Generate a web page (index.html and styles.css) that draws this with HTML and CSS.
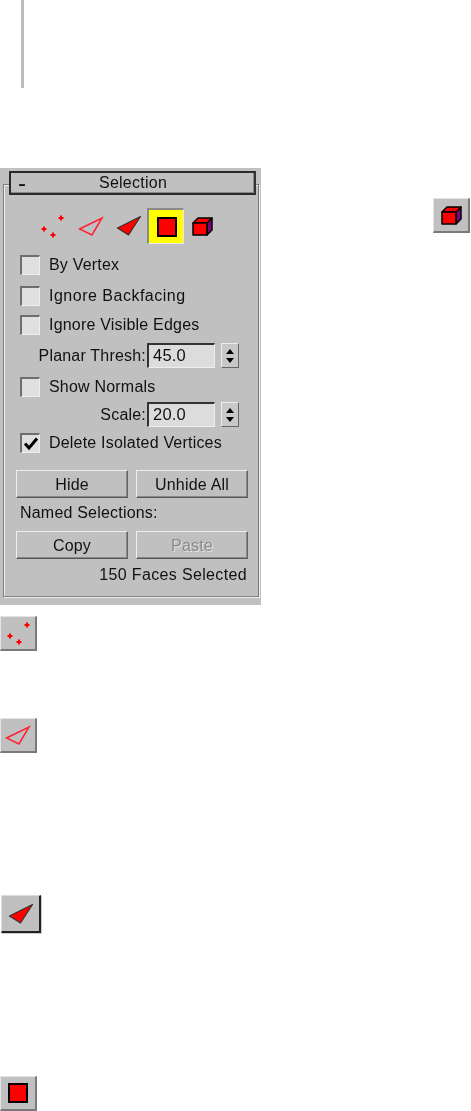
FILE: index.html
```html
<!DOCTYPE html>
<html lang="en">
<head>
<meta charset="utf-8">
<title>Selection</title>
<link rel="stylesheet" href="styles.css">
</head>
<body>
<svg width="0" height="0" class="defs">
  <defs>
    <g id="i-verts" fill="#ff0000">
      <path d="M20 1.5h2v1.5h1.5v2h-1.5v1.5h-2v-1.5h-1.5v-2h1.5z"/>
      <path d="M3 12.5h2v1.5h1.5v2h-1.5v1.5h-2v-1.5h-1.5v-2h1.5z"/>
      <path d="M12 18.5h2v1.5h1.5v2h-1.5v1.5h-2v-1.5h-1.5v-2h1.5z"/>
    </g>
    <path id="i-edges" d="M1.5 13 L24 2 L14 19 Z" fill="none" stroke="#ff2030" stroke-width="1.5"/>
    <path id="i-face" d="M1.5 13 L24.5 1.5 L12.5 20 Z" fill="#ff0000" stroke="#333" stroke-width="1.2" stroke-linejoin="round"/>
    <rect id="i-poly" x="1" y="1" width="18" height="18" fill="#ff0000" stroke="#000" stroke-width="2"/>
    <g id="i-cube" stroke="#000" stroke-width="1.5" stroke-linejoin="round">
      <path d="M15 6 L20 1 V13 L15 18 Z" fill="#800080"/>
      <path d="M1 6 L6 1 H20 L15 6 Z" fill="#ff0000"/>
      <rect x="1" y="6" width="14" height="12" fill="#ff0000"/>
    </g>
  </defs>
</svg>

<div class="rule"></div>

<div class="top">
  <section class="panel">
    <div class="group">
      <header class="title"><span class="minus">-</span><span class="title-text">Selection</span></header>
      <div class="levels">
        <span class="level lv-v"><svg width="24" height="25"><use href="#i-verts"/></svg></span>
        <span class="level lv-e"><svg width="26" height="21"><use href="#i-edges"/></svg></span>
        <span class="level lv-f"><svg width="26" height="22"><use href="#i-face"/></svg></span>
        <span class="level active"><svg width="20" height="20"><use href="#i-poly"/></svg></span>
        <span class="level lv-c"><svg width="21" height="19"><use href="#i-cube"/></svg></span>
      </div>
      <label class="check c1"><span class="box"></span>By Vertex</label>
      <label class="check c2 wide"><span class="box"></span>Ignore Backfacing</label>
      <label class="check c3"><span class="box"></span>Ignore Visible Edges</label>
      <div class="field f1">
        <span class="field-label">Planar Thresh:</span><span class="input">45.0</span>
        <span class="spin"><i class="up"></i><i class="down"></i></span>
      </div>
      <label class="check c4"><span class="box"></span>Show Normals</label>
      <div class="field f2">
        <span class="field-label">Scale:</span><span class="input">20.0</span>
        <span class="spin"><i class="up"></i><i class="down"></i></span>
      </div>
      <label class="check c5"><span class="box"><svg width="16" height="16" viewBox="0 0 16 16"><path d="M2 7.5 L6 12 L14 2.5" fill="none" stroke="#000" stroke-width="3"/></svg></span>Delete Isolated Vertices</label>
      <div class="buttons b1"><button class="btn">Hide</button><button class="btn">Unhide All</button></div>
      <div class="named">Named Selections:</div>
      <div class="buttons b2"><button class="btn">Copy</button><button class="btn off">Paste</button></div>
      <div class="status">150 Faces Selected</div>
    </div>
  </section>
  <span class="tool right"><svg width="21" height="19"><use href="#i-cube"/></svg></span>
</div>

<span class="tool t1"><svg width="24" height="25"><use href="#i-verts"/></svg></span>
<span class="tool t2"><svg width="26" height="21"><use href="#i-edges"/></svg></span>
<span class="tool t3"><svg width="26" height="22"><use href="#i-face"/></svg></span>
<span class="tool t4"><svg width="20" height="20"><use href="#i-poly"/></svg></span>
</body>
</html>
```
FILE: styles.css
```css
html, body { margin: 0; padding: 0; background: #fff; }
body { width: 471px; height: 1111px; overflow: hidden; font-family: "Liberation Sans", Arial, sans-serif; color: #111; }
.defs { position: absolute; }
.rule { width: 3px; height: 88px; margin-left: 21px; background: #bdbdbd; }

.top { display: flex; align-items: flex-start; margin-top: 80px; }
.panel { width: 261px; height: 437px; background: #c0c0c0; padding: 3px 2px 0 3px; box-sizing: border-box; filter: blur(0.5px); }
.group { position: relative; height: 426px; }
.group::before { content: ""; position: absolute; left: 0; right: 0; top: 13px; bottom: 0; border: 1px solid #808080; border-right-color: #777; box-shadow: 1px 1px 0 #eee, inset 1px 1px 0 #eee; pointer-events: none; }

.title { position: relative; display: flex; height: 24px; margin: 0 3px 0 6px; box-sizing: border-box; border: 2px solid #2a2a2a; border-right-color: #333; background: #c0c0c0; font-size: 16px; line-height: 20px; box-shadow: inset -1px -1px 0 #888; }
.minus { width: 20px; padding-left: 7px; box-sizing: border-box; font-size: 24px; line-height: 20px; }
.title-text { position: absolute; left: 0; right: 0; top: 0; text-align: center; letter-spacing: .25px; padding-left: 1px; }

.levels { display: flex; align-items: center; height: 36px; margin-top: 13px; margin-left: 37px; position: relative; }
.level { display: flex; align-items: center; justify-content: center; }
.lv-v { width: 24px; margin-right: 14px; }
.lv-e { width: 26px; margin-right: 12px; }
.lv-f { width: 26px; margin-right: 5px; }
.active { width: 37px; height: 36px; box-sizing: border-box; padding-left: 1px; background: #ffff00; border-top: 2px solid #8a8a8a; border-left: 2px solid #8a8a8a; border-right: 1px solid #e8e8e8; border-bottom: 1px solid #e8e8e8; margin-right: 8px; }
.lv-c { width: 21px; }

.check { display: flex; align-items: center; height: 20px; margin-left: 17px; font-size: 16px; line-height: 20px; letter-spacing: .2px; position: relative; }
.check.wide { letter-spacing: .5px; }
.box { flex: none; display: flex; align-items: center; justify-content: center; width: 20px; height: 20px; box-sizing: border-box; margin-right: 9px; background: #e0e0e0; border-top: 2px solid #6e6e6e; border-left: 2px solid #6e6e6e; border-right: 1px solid #eee; border-bottom: 1px solid #eee; }
.c1 { margin-top: 11px; }
.c2 { margin-top: 11px; }
.c3 { margin-top: 9px; }
.c4 { margin-top: 9px; }
.c5 { margin-top: 6px; }

.field { display: flex; align-items: center; justify-content: flex-end; height: 25px; font-size: 16px; margin-right: 20px; letter-spacing: .2px; }
.f1 { margin-top: 8px; }
.f2 { margin-top: 5px; }
.field-label { margin-right: 1px; }
.input { width: 68px; height: 25px; box-sizing: border-box; background: #dcdcdc; border-top: 2px solid #333; border-left: 2px solid #333; border-right: 1px solid #eee; border-bottom: 1px solid #eee; padding-left: 4px; line-height: 21px; font-size: 16.5px; }
.spin { width: 18px; height: 25px; margin-left: 6px; box-sizing: border-box; display: flex; flex-direction: column; align-items: center; justify-content: center; gap: 4px; background: #c8c8c8; border: 1px solid; border-color: #eee #666 #666 #eee; }
.spin i { width: 0; height: 0; border-left: 4px solid transparent; border-right: 4px solid transparent; }
.spin .up { border-bottom: 5px solid #000; }
.spin .down { border-top: 5px solid #000; }

.buttons { display: flex; gap: 8px; margin-left: 13px; margin-right: 11px; }
.b1 { margin-top: 17px; }
.b2 { margin-top: 8px; }
.btn { flex: 1; height: 28px; padding: 1px 0 0; font: 16px/1 "Liberation Sans", Arial, sans-serif; letter-spacing: .2px; color: #111; background: #c0c0c0; border: 1px solid; border-color: #eee #666 #555 #eee; box-shadow: inset -1px -1px 0 #888; }
.btn.off { color: #8a8a8a; text-shadow: 1px 1px 0 #e4e4e4; }
.named { font-size: 16px; line-height: 20px; margin: 5px 0 0 17px; letter-spacing: .2px; }
.status { font-size: 16px; line-height: 20px; margin: 6px 12px 0 0; text-align: right; letter-spacing: .35px; }

.tool { display: flex; align-items: center; justify-content: center; box-sizing: border-box; background: #c0c0c0; border-style: solid; border-color: #e4e4e4 #7a7a7a #7a7a7a #e4e4e4; border-width: 1px 2px 2px 1px; filter: blur(0.5px); }
.right { width: 37px; height: 35px; margin: 30px 0 0 172px; }
.t1 { width: 37px; height: 35px; margin-top: 11px; }
.t2 { width: 37px; height: 35px; margin-top: 67px; }
.t3 { width: 40px; height: 38px; margin: 142px 0 0 1px; border-color: #ddd #222 #222 #ddd; box-shadow: 1px 1px 0 #ccc; }
.t4 { width: 37px; height: 35px; margin-top: 143px; }
```
